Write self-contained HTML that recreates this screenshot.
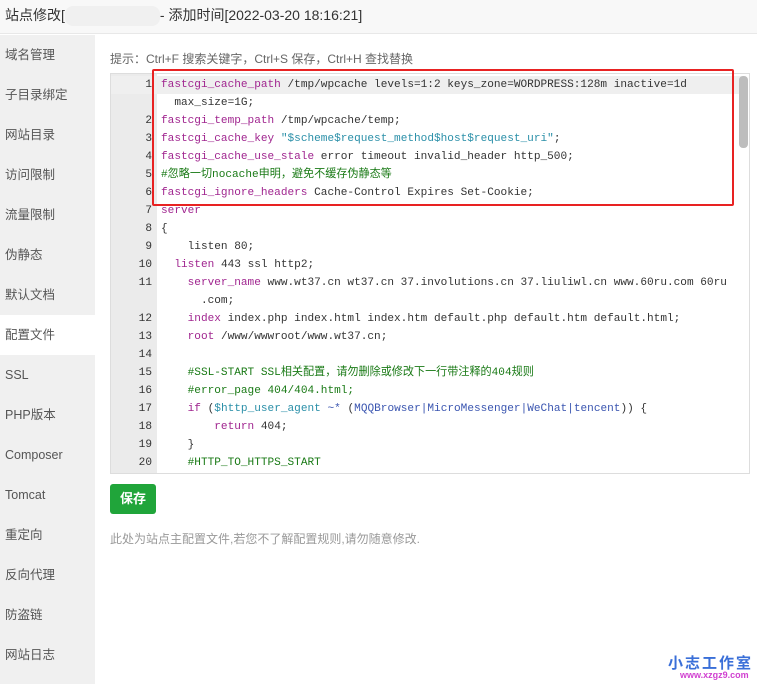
<!DOCTYPE html>
<html><head><meta charset="utf-8"><style>
*{margin:0;padding:0;box-sizing:border-box}
body{width:757px;height:684px;background:#fff;font-family:"Liberation Sans","Noto Sans CJK SC",sans-serif;position:relative;overflow:hidden}
.title{position:absolute;left:0;top:0;width:757px;height:34px;background:#f8f8f8;border-bottom:1px solid #e8e8e8;font-size:14px;color:#333;line-height:30px;padding-left:5px}
.blur{display:inline-block;width:95px;height:20px;background:#f0f0f0;border-radius:8px;vertical-align:middle}
.side{position:absolute;left:0;top:35px;width:95px;height:649px;background:#f0f0f0}
.side div{height:40px;line-height:40px;font-size:12.5px;color:#555;padding-left:5px}
.side .on{background:#fff}
.tip{position:absolute;left:110px;top:50px;font-size:12px;color:#666}
.ed{position:absolute;left:110px;top:73px;width:640px;height:401px;border:1px solid #ddd;overflow:hidden;background:#fff}
.gut{position:absolute;left:0;top:0;width:46px;height:100%;background:#ebebeb}
.code{position:absolute;left:0;top:2px;width:630px;font-family:"Liberation Mono","Noto Sans CJK SC",monospace;font-size:11.1px;line-height:18px;color:#333}
.l{position:relative;height:18px;white-space:pre;padding-left:50px}
.n{position:absolute;left:0;width:41px;text-align:right;color:#333}
.k{color:#a0258f}.s{color:#2a8fa8}.c{color:#1a7a16}.v{color:#3a55b0}
.hl{background:#efefef}
.red{position:absolute;left:152px;top:69px;width:582px;height:137px;border:2px solid #e82222;border-radius:2px}
.btn{position:absolute;left:110px;top:484px;width:46px;height:30px;background:#20a53a;color:#fff;border-radius:3px;font-size:13px;font-weight:bold;text-align:center;line-height:30px}
.foot{position:absolute;left:110px;top:530px;font-size:12px;color:#999}
.logo{position:absolute;left:668px;top:652px;font-size:15px;color:#3a6fd8;font-weight:bold;letter-spacing:2px}
.logo2{position:absolute;left:680px;top:670px;font-size:9px;color:#d040d0;font-weight:bold}
</style></head><body>
<div class="title">站点修改[<span class="blur"></span>- 添加时间[2022-03-20 18:16:21]</div>
<div class="side">
<div>域名管理</div><div>子目录绑定</div><div>网站目录</div><div>访问限制</div><div>流量限制</div><div>伪静态</div><div>默认文档</div><div class="on">配置文件</div><div>SSL</div><div>PHP版本</div><div>Composer</div><div>Tomcat</div><div>重定向</div><div>反向代理</div><div>防盗链</div><div>网站日志</div>
</div>
<div class="tip">提示：Ctrl+F 搜索关键字，Ctrl+S 保存，Ctrl+H 查找替换</div>
<div class="ed"><div class="gut"></div>
<div class="code">
<div class="l hl"><span class="n">1</span><span class="k">fastcgi_cache_path</span> /tmp/wpcache levels=1:2 keys_zone=WORDPRESS:128m inactive=1d</div>
<div class="l">  max_size=1G;</div>
<div class="l"><span class="n">2</span><span class="k">fastcgi_temp_path</span> /tmp/wpcache/temp;</div>
<div class="l"><span class="n">3</span><span class="k">fastcgi_cache_key</span> <span class="s">"$scheme$request_method$host$request_uri"</span>;</div>
<div class="l"><span class="n">4</span><span class="k">fastcgi_cache_use_stale</span> error timeout invalid_header http_500;</div>
<div class="l"><span class="n">5</span><span class="c">#忽略一切nocache申明，避免不缓存伪静态等</span></div>
<div class="l"><span class="n">6</span><span class="k">fastcgi_ignore_headers</span> Cache-Control Expires Set-Cookie;</div>
<div class="l"><span class="n">7</span><span class="k">server</span></div>
<div class="l"><span class="n">8</span>{</div>
<div class="l"><span class="n">9</span>    listen 80;</div>
<div class="l"><span class="n">10</span>  <span class="k">listen</span> 443 ssl http2;</div>
<div class="l"><span class="n">11</span>    <span class="k">server_name</span> www.wt37.cn wt37.cn 37.involutions.cn 37.liuliwl.cn www.60ru.com 60ru</div>
<div class="l">      .com;</div>
<div class="l"><span class="n">12</span>    <span class="k">index</span> index.php index.html index.htm default.php default.htm default.html;</div>
<div class="l"><span class="n">13</span>    <span class="k">root</span> /www/wwwroot/www.wt37.cn;</div>
<div class="l"><span class="n">14</span></div>
<div class="l"><span class="n">15</span>    <span class="c">#SSL-START SSL相关配置，请勿删除或修改下一行带注释的404规则</span></div>
<div class="l"><span class="n">16</span>    <span class="c">#error_page 404/404.html;</span></div>
<div class="l"><span class="n">17</span>    <span class="k">if</span> (<span class="s">$http_user_agent</span> <span class="v">~*</span> (<span class="v">MQQBrowser|MicroMessenger|WeChat|tencent</span>)) {</div>
<div class="l"><span class="n">18</span>        <span class="k">return</span> 404;</div>
<div class="l"><span class="n">19</span>    }</div>
<div class="l"><span class="n">20</span>    <span class="c">#HTTP_TO_HTTPS_START</span></div>
</div>
<div style="position:absolute;left:628px;top:2px;width:9px;height:72px;background:#bdbdbd;border-radius:4px"></div>
</div>
<div class="red"></div>
<div class="btn">保存</div>
<div class="foot">此处为站点主配置文件,若您不了解配置规则,请勿随意修改.</div>
<div class="logo">小志工作室</div>
<div class="logo2">www.xzgz9.com</div>
</body></html>
